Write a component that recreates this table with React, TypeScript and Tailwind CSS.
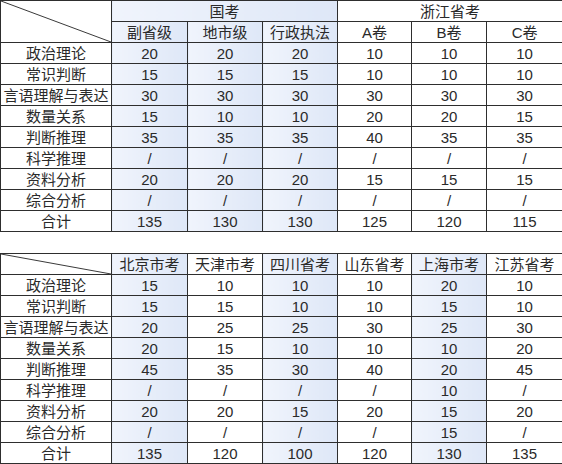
import React from "react";

const BLUE = "bg-gradient-to-r from-[#f0f4fc] to-[#dee7f7]";
const cellB = "border border-[#2e2e2e] p-0 text-center align-middle leading-none";

type Row = [string, ...string[]];

const t1: Row[] = [
  ["政治理论", "20", "20", "20", "10", "10", "10"],
  ["常识判断", "15", "15", "15", "10", "10", "10"],
  ["言语理解与表达", "30", "30", "30", "30", "30", "30"],
  ["数量关系", "15", "10", "10", "20", "20", "15"],
  ["判断推理", "35", "35", "35", "40", "35", "35"],
  ["科学推理", "/", "/", "/", "/", "/", "/"],
  ["资料分析", "20", "20", "20", "15", "15", "15"],
  ["综合分析", "/", "/", "/", "/", "/", "/"],
  ["合计", "135", "130", "130", "125", "120", "115"],
];

const t2: Row[] = [
  ["政治理论", "15", "10", "10", "10", "20", "10"],
  ["常识判断", "15", "15", "10", "10", "15", "10"],
  ["言语理解与表达", "20", "25", "25", "30", "25", "30"],
  ["数量关系", "20", "15", "10", "10", "10", "20"],
  ["判断推理", "45", "35", "30", "40", "20", "45"],
  ["科学推理", "/", "/", "/", "/", "10", "/"],
  ["资料分析", "20", "20", "15", "20", "15", "20"],
  ["综合分析", "/", "/", "/", "/", "15", "/"],
  ["合计", "135", "120", "100", "120", "130", "135"],
];

const widths = [111, 76, 75, 75, 74, 75, 76];

function Cols() {
  return (
    <colgroup>
      {widths.map((w, i) => (
        <col key={i} style={{ width: w }} />
      ))}
    </colgroup>
  );
}

function Diag() {
  return (
    <svg className="absolute inset-0 h-full w-full" preserveAspectRatio="none" viewBox="0 0 100 100">
      <line x1="0" y1="0" x2="100" y2="100" stroke="#3a3a3a" strokeWidth="1" vectorEffect="non-scaling-stroke" />
    </svg>
  );
}

function Body({ rows, blue }: { rows: Row[]; blue: boolean[] }) {
  return (
    <tbody>
      {rows.map((r, i) => (
        <tr key={i} className="h-[21px]">
          {r.map((c, j) => (
            <td key={j} className={`${cellB} ${j > 0 && blue[j - 1] ? BLUE : "bg-white"}`}>
              {c}
            </td>
          ))}
        </tr>
      ))}
    </tbody>
  );
}

export default function App() {
  const font = { fontFamily: '"Liberation Sans", "Noto Sans CJK SC", sans-serif' };
  return (
    <div className="w-[562px] h-[464px] bg-white text-[15px] text-[#2a2a2a]" style={font}>
      <table className="w-[562px] table-fixed border-collapse">
        <Cols />
        <thead>
          <tr className="h-[21px]">
            <td rowSpan={2} className={`${cellB} relative bg-white`}>
              <Diag />
            </td>
            <td colSpan={3} className={`${cellB} ${BLUE}`}>国考</td>
            <td colSpan={3} className={`${cellB} bg-white`}>浙江省考</td>
          </tr>
          <tr className="h-[21px]">
            <td className={`${cellB} ${BLUE}`}>副省级</td>
            <td className={`${cellB} ${BLUE}`}>地市级</td>
            <td className={`${cellB} ${BLUE}`}>行政执法</td>
            <td className={`${cellB} bg-white`}>A卷</td>
            <td className={`${cellB} bg-white`}>B卷</td>
            <td className={`${cellB} bg-white`}>C卷</td>
          </tr>
        </thead>
        <Body rows={t1} blue={[true, true, true, false, false, false]} />
      </table>
      <div className="h-[21px]" />
      <table className="w-[562px] table-fixed border-collapse">
        <Cols />
        <thead>
          <tr className="h-[21px]">
            <td className={`${cellB} relative bg-white`}>
              <Diag />
            </td>
            <td className={`${cellB} ${BLUE}`}>北京市考</td>
            <td className={`${cellB} bg-white`}>天津市考</td>
            <td className={`${cellB} ${BLUE}`}>四川省考</td>
            <td className={`${cellB} bg-white`}>山东省考</td>
            <td className={`${cellB} ${BLUE}`}>上海市考</td>
            <td className={`${cellB} bg-white`}>江苏省考</td>
          </tr>
        </thead>
        <Body rows={t2} blue={[true, false, true, false, true, false]} />
      </table>
    </div>
  );
}
